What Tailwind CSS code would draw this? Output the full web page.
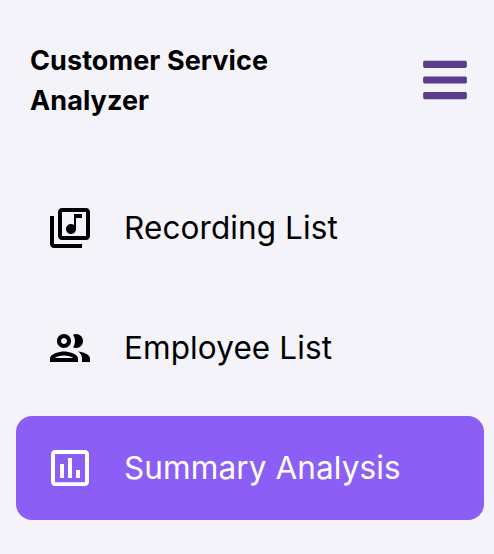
<!DOCTYPE html>
<html lang="en">
<head>
<meta charset="utf-8">
<title>Customer Service Analyzer</title>
<script src="https://cdn.jsdelivr.net/npm/@tailwindcss/browser@4"></script>
</head>
<body class="bg-[#f4f3fa] text-black font-['Inter',sans-serif] overflow-hidden">
<aside class="w-[494px] h-[554px]">
  <header class="flex items-center justify-between h-40 pl-[30px] pr-[27px]">
    <h1 class="pt-px text-[27px] leading-10 font-bold tracking-[0.08px]">Customer Service<br>Analyzer</h1>
    <button type="button" aria-label="Menu" class="text-[#5b3d8a]">
      <svg class="block w-[44px] h-[50px]" viewBox="0 0 448 512" fill="currentColor"><path d="M16 132h416c8.837 0 16-7.163 16-16V76c0-8.837-7.163-16-16-16H16C7.163 60 0 67.163 0 76v40c0 8.837 7.163 16 16 16zm0 160h416c8.837 0 16-7.163 16-16v-40c0-8.837-7.163-16-16-16H16c-8.837 0-16 7.163-16 16v40c0 8.837 7.163 16 16 16zm0 160h416c8.837 0 16-7.163 16-16v-40c0-8.837-7.163-16-16-16H16c-8.837 0-16 7.163-16 16v40c0 8.837 7.163 16 16 16z"/></svg>
    </button>
  </header>
  <nav class="flex flex-col gap-4 pt-4 pl-4 pr-[10px] text-[31.5px] leading-[48px] tracking-[0.1px]">
    <a class="flex items-center h-[104px] pl-[30px] gap-[30px] rounded-2xl">
      <svg class="size-12 shrink-0" viewBox="0 0 24 24" fill="currentColor"><path d="M20 2H8c-1.1 0-2 .9-2 2v12c0 1.1.9 2 2 2h12c1.1 0 2-.9 2-2V4c0-1.1-.9-2-2-2zm0 14H8V4h12v12zm-7.5-1c1.38 0 2.5-1.12 2.5-2.5V7h3V5h-4v5.51c-.42-.32-.93-.51-1.5-.51-1.38 0-2.5 1.12-2.5 2.5s1.12 2.5 2.5 2.5zM4 6H2v14c0 1.1.9 2 2 2h14v-2H4V6z"/></svg>
      <span class="whitespace-nowrap">Recording List</span>
    </a>
    <a class="flex items-center h-[104px] pl-[30px] gap-[30px] rounded-2xl">
      <svg class="size-12 shrink-0" viewBox="0 0 24 24" fill="currentColor"><path d="M9 13.75c-2.34 0-7 1.17-7 3.5V19h14v-1.75c0-2.33-4.66-3.5-7-3.5zM4.34 17c.84-.58 2.87-1.25 4.66-1.25s3.82.67 4.66 1.25H4.34zM9 12c1.93 0 3.5-1.57 3.5-3.5S10.93 5 9 5 5.5 6.57 5.5 8.5 7.07 12 9 12zm0-5c.83 0 1.5.67 1.5 1.5S9.83 10 9 10s-1.5-.67-1.5-1.5S8.17 7 9 7zm7.04 6.81c1.16.84 1.96 1.96 1.96 3.44V19h4v-1.75c0-2.02-3.5-3.17-5.96-3.44zM15 12c1.93 0 3.5-1.57 3.5-3.5S16.93 5 15 5c-.54 0-1.04.13-1.5.35.63.89 1 1.98 1 3.15s-.37 2.26-1 3.15c.46.22.96.35 1.5.35z"/></svg>
      <span class="whitespace-nowrap">Employee List</span>
    </a>
    <a class="flex items-center h-[104px] pl-[30px] gap-[30px] rounded-2xl bg-[#8b5ff5] text-white">
      <svg class="size-12 shrink-0" viewBox="0 0 24 24" fill="currentColor"><path d="M9 17H7v-7h2v7zm4 0h-2V7h2v10zm4 0h-2v-4h2v4zm2.5 2.1h-15V5h15v14.1zm0-16.1h-15c-1.1 0-2 .9-2 2v14c0 1.1.9 2 2 2h15c1.1 0 2-.9 2-2V5c0-1.1-.9-2-2-2z"/></svg>
      <span class="whitespace-nowrap">Summary Analysis</span>
    </a>
  </nav>
</aside>
</body>
</html>
